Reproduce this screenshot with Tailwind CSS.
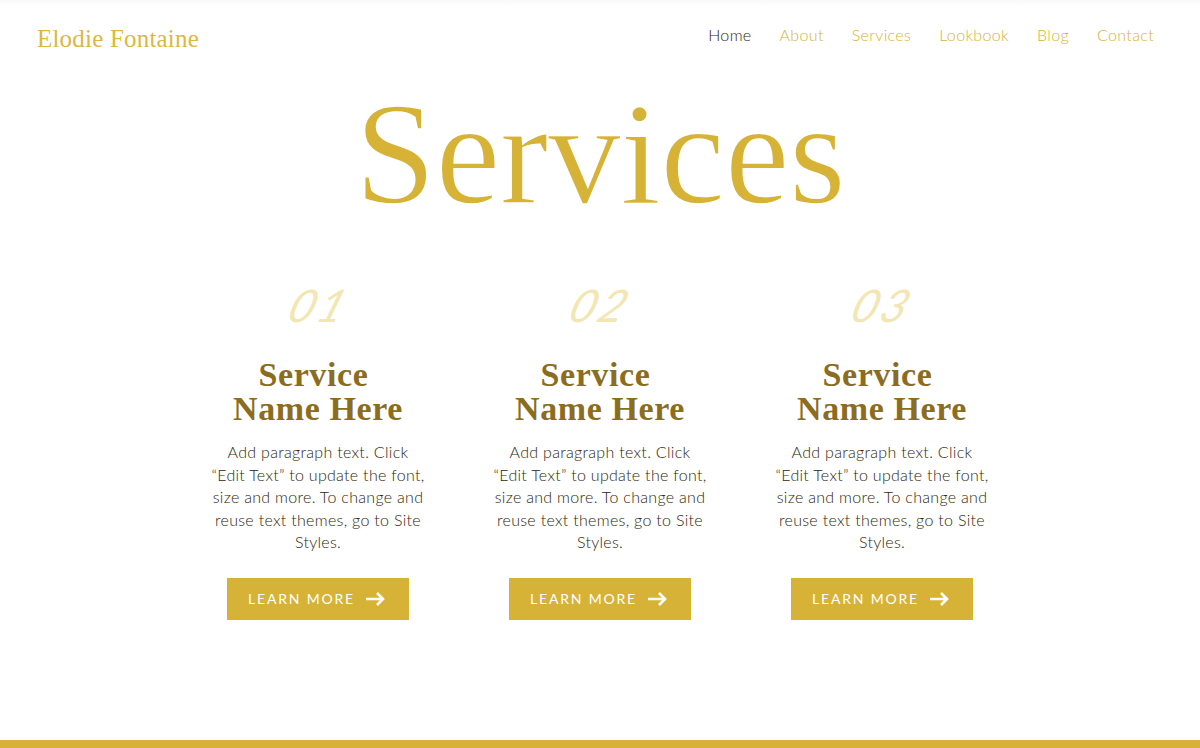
<!DOCTYPE html>
<html lang="en">
<head>
    <meta charset="UTF-8">
    <title>Services</title>
    <script src="https://cdn.jsdelivr.net/npm/@tailwindcss/browser@4"></script>
</head>
<body class="bg-white font-['Lato',sans-serif] overflow-hidden">
    <div class="h-[748px] flex flex-col">
        <!-- Header -->
        <nav class="h-[70px] flex justify-between items-start bg-gradient-to-b from-gray-100/60 to-white to-[6px]">
            <a class="ml-[37px] mt-[24px] text-[25px] leading-[30px] tracking-[0.2px] text-[#dcb83f] font-['Liberation_Serif',serif]">Elodie Fontaine</a>
            <div class="mr-[46px] mt-[25px] flex gap-[28px] text-[16px] leading-[20px] tracking-[0.35px] font-light text-[#d6b336]">
                <a class="text-[#2f2608]">Home</a>
                <a>About</a>
                <a>Services</a>
                <a>Lookbook</a>
                <a>Blog</a>
                <a>Contact</a>
            </div>
        </nav>

        <h1 class="mt-[4px] text-center text-[146px] leading-[160px] -tracking-[0.5px] text-[#d6b336] [-webkit-text-stroke:1.5px_white] font-['Liberation_Serif',serif]">Services</h1>

        <!-- Service columns -->
        <div class="mt-[42px] mx-auto w-[846px] grid grid-cols-3">
            <div class="flex flex-col items-center">
                <div class="h-[52px] ml-[6px] text-[45px] leading-[59px] tracking-[3px] italic skew-x-[-20deg] text-[#f2e6b3]">01</div>
                <h2 class="mt-[30px] text-center text-[34px] leading-[34px] tracking-[0.6px] font-bold text-[#8a6d20] font-['Liberation_Serif',serif]">Service&nbsp;<br>Name Here</h2>
                <p class="mt-[15px] w-[218px] text-center text-[16px] leading-[22.5px] tracking-[0.3px] font-light text-[#2f2608]">Add paragraph text. Click “Edit Text” to update the font, size and more. To change and reuse text themes, go to Site Styles.</p>
                <a class="mt-[24px] w-[182px] h-[42px] pr-[3px] flex items-center justify-center gap-[11px] bg-[#d6b336] text-white text-[14px] tracking-[1.8px]">
                    LEARN MORE
                    <svg width="19" height="14" viewBox="0 0 19 14" fill="none" stroke="currentColor" stroke-width="2.6"><path d="M0 7h17M11 1l6 6-6 6"/></svg>
                </a>
            </div>
            <div class="flex flex-col items-center">
                <div class="h-[52px] ml-[4px] text-[45px] leading-[59px] tracking-[3px] italic skew-x-[-20deg] text-[#f2e6b3]">02</div>
                <h2 class="mt-[30px] text-center text-[34px] leading-[34px] tracking-[0.6px] font-bold text-[#8a6d20] font-['Liberation_Serif',serif]">Service&nbsp;<br>Name Here</h2>
                <p class="mt-[15px] w-[218px] text-center text-[16px] leading-[22.5px] tracking-[0.3px] font-light text-[#2f2608]">Add paragraph text. Click “Edit Text” to update the font, size and more. To change and reuse text themes, go to Site Styles.</p>
                <a class="mt-[24px] w-[182px] h-[42px] pr-[3px] flex items-center justify-center gap-[11px] bg-[#d6b336] text-white text-[14px] tracking-[1.8px]">
                    LEARN MORE
                    <svg width="19" height="14" viewBox="0 0 19 14" fill="none" stroke="currentColor" stroke-width="2.6"><path d="M0 7h17M11 1l6 6-6 6"/></svg>
                </a>
            </div>
            <div class="flex flex-col items-center">
                <div class="h-[52px] ml-[4px] text-[45px] leading-[59px] tracking-[3px] italic skew-x-[-20deg] text-[#f2e6b3]">03</div>
                <h2 class="mt-[30px] text-center text-[34px] leading-[34px] tracking-[0.6px] font-bold text-[#8a6d20] font-['Liberation_Serif',serif]">Service&nbsp;<br>Name Here</h2>
                <p class="mt-[15px] w-[218px] text-center text-[16px] leading-[22.5px] tracking-[0.3px] font-light text-[#2f2608]">Add paragraph text. Click “Edit Text” to update the font, size and more. To change and reuse text themes, go to Site Styles.</p>
                <a class="mt-[24px] w-[182px] h-[42px] pr-[3px] flex items-center justify-center gap-[11px] bg-[#d6b336] text-white text-[14px] tracking-[1.8px]">
                    LEARN MORE
                    <svg width="19" height="14" viewBox="0 0 19 14" fill="none" stroke="currentColor" stroke-width="2.6"><path d="M0 7h17M11 1l6 6-6 6"/></svg>
                </a>
            </div>
        </div>

        <footer class="mt-auto h-[8px] bg-[#d6b336]"></footer>
    </div>
</body>
</html>
